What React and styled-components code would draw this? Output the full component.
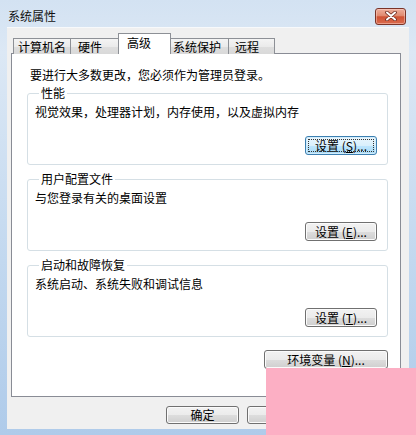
import React from 'react';
import styled, { createGlobalStyle } from 'styled-components';

const GlobalStyle = createGlobalStyle`
  html, body {
    margin: 0;
    padding: 0;
  }
  body {
    width: 416px;
    height: 435px;
    overflow: hidden;
    font-family: "Noto Sans CJK SC", "Microsoft YaHei", sans-serif;
    font-size: 12px;
    color: #000;
  }
`;

const Frame = styled.div`
  position: relative;
  width: 416px;
  height: 435px;
  box-sizing: border-box;
  padding: 0 7px 6px 7px;
  display: flex;
  flex-direction: column;
  background: linear-gradient(to bottom, #d3e2f2 0%, #dce8f5 12%, #c2d8ef 60%, #afcbea 100%);
`;

const TitleBar = styled.div`
  height: 28px;
  box-sizing: border-box;
  padding: 4px 3px 0 1px;
  display: flex;
  align-items: center;
  justify-content: space-between;
`;

const Title = styled.span`
  line-height: 14px;
  color: #111;
`;

const CloseButton = styled.div`
  width: 31px;
  height: 17px;
  box-sizing: border-box;
  border: 1px solid #7a3428;
  border-radius: 3px;
  background: linear-gradient(to bottom, #eeae9c 0%, #e08a6f 45%, #cf5234 52%, #da6c4f 100%);
  box-shadow: inset 0 0 0 1px rgba(255, 220, 210, 0.45);
  display: flex;
  align-items: center;
  justify-content: center;
`;

const Client = styled.div`
  flex: 1;
  display: flex;
  flex-direction: column;
  box-sizing: border-box;
  padding: 5px 8px 0 4px;
  background: #f0f0f0;
  border-top: 1px solid #f7f9fb;
  margin-top: -1px;
`;

const TabRow = styled.div`
  display: flex;
  align-items: flex-end;
  padding-left: 2px;
  margin-bottom: -1px;
  position: relative;
  z-index: 1;
`;

const Tab = styled.div`
  position: relative;
  box-sizing: border-box;
  width: ${(p) => p.$w}px;
  height: ${(p) => (p.$active ? 21 : 16)}px;
  margin-left: ${(p) => p.$ml}px;
  padding: ${(p) => (p.$active ? 2 : 1)}px 0 0 ${(p) => p.$pl}px;
  border: 1px solid #8d9096;
  border-bottom: none;
  line-height: 14px;
  white-space: nowrap;
  background: ${(p) =>
    p.$active ? '#ffffff' : 'linear-gradient(to bottom, #f4f4f4 0%, #ebebeb 50%, #dedede 51%, #d9d9d9 100%)'};
  z-index: ${(p) => (p.$active ? 2 : 1)};
`;

const Panel = styled.div`
  flex: 1;
  box-sizing: border-box;
  padding: 14px 12px 0 15px;
  background: #fff;
  border: 1px solid #898c95;
  display: flex;
  flex-direction: column;
`;

const Intro = styled.div`
  line-height: 14px;
  margin: 0 0 4px 3px;
`;

const Group = styled.fieldset`
  margin: 0 0 7px 0;
  padding: 5px 10px 9px 7px;
  border: 1px solid #d5dfe5;
  border-radius: 3px;
  min-width: 0;
`;

const Legend = styled.legend`
  padding: 0 2px;
  margin-left: 4px;
  line-height: 14px;
`;

const GroupText = styled.div`
  line-height: 14px;
`;

const ButtonLine = styled.div`
  display: flex;
  justify-content: flex-end;
  margin-top: ${(p) => p.$mt || 0}px;
`;

const Button = styled.div`
  width: ${(p) => p.$w}px;
  height: ${(p) => p.$h || 19}px;
  box-sizing: border-box;
  border: 1px solid ${(p) => (p.$focus ? '#3c7fb1' : '#707070')};
  border-radius: 3px;
  background: ${(p) =>
    p.$focus
      ? 'linear-gradient(to bottom, #eaf6fd 0%, #d9f0fc 50%, #bee6fd 51%, #a7d9f5 100%)'
      : 'linear-gradient(to bottom, #f2f2f2 0%, #ebebeb 50%, #dddddd 51%, #cfcfcf 100%)'};
  box-shadow: inset 0 0 0 1px ${(p) => (p.$focus ? '#d2ecfb' : '#fbfbfb')};
  display: flex;
  align-items: center;
  justify-content: center;
  line-height: 14px;
  white-space: nowrap;
  position: relative;

  ${(p) =>
    p.$focus &&
    `
    &::after {
      content: '';
      position: absolute;
      inset: 2px;
      border: 1px dotted #333;
    }
  `}
`;

const Key = styled.u`
  text-decoration-thickness: 1px;
  text-underline-offset: 1px;
`;

const Footer = styled.div`
  height: 32px;
  box-sizing: border-box;
  padding-top: 9px;
  display: flex;
  justify-content: flex-end;
  gap: 8px;
`;

const Cover = styled.div`
  position: absolute;
  left: 266px;
  top: 368px;
  width: 150px;
  height: 67px;
  background: #fcafc4;
`;

const CloseIcon = () => (
  <svg width="12" height="10" viewBox="0 0 12 10">
    <path d="M2 1.5 L10 8.5 M10 1.5 L2 8.5" stroke="#6b2a20" strokeWidth="3.6" strokeLinecap="round" />
    <path d="M2 1.5 L10 8.5 M10 1.5 L2 8.5" stroke="#ffffff" strokeWidth="2" strokeLinecap="round" />
  </svg>
);

const tabs = [
  { label: '计算机名', w: 58, ml: 0, pl: 4 },
  { label: '硬件', w: 51, ml: -1, pl: 7 },
  { label: '高级', w: 53, ml: -3, pl: 8, active: true },
  { label: '系统保护', w: 59, ml: -1, pl: 2 },
  { label: '远程', w: 47, ml: -1, pl: 6 },
];

const groups = [
  { title: '性能', text: '视觉效果，处理器计划，内存使用，以及虚拟内存', key: 'S', focus: true },
  { title: '用户配置文件', text: '与您登录有关的桌面设置', key: 'E' },
  { title: '启动和故障恢复', text: '系统启动、系统失败和调试信息', key: 'T' },
];

export default function App() {
  return (
    <>
      <GlobalStyle />
      <Frame>
        <TitleBar>
          <Title>系统属性</Title>
          <CloseButton>
            <CloseIcon />
          </CloseButton>
        </TitleBar>
        <Client>
          <TabRow>
            {tabs.map((t) => (
              <Tab key={t.label} $w={t.w} $ml={t.ml} $pl={t.pl} $active={t.active}>
                {t.label}
              </Tab>
            ))}
          </TabRow>
          <Panel>
            <Intro>要进行大多数更改，您必须作为管理员登录。</Intro>
            {groups.map((g) => (
              <Group key={g.title}>
                <Legend>{g.title}</Legend>
                <GroupText>{g.text}</GroupText>
                <ButtonLine $mt={17}>
                  <Button $w={72} $focus={g.focus}>
                    设置 (<Key>{g.key}</Key>)...
                  </Button>
                </ButtonLine>
              </Group>
            ))}
            <ButtonLine $mt={6}>
              <Button $w={124}>
                环境变量 (<Key>N</Key>)...
              </Button>
            </ButtonLine>
          </Panel>
          <Footer>
            <Button $w={73} $h={18}>确定</Button>
            <Button $w={73} $h={18}>取消</Button>
            <Button $w={73} $h={18}>应用 (<Key>A</Key>)</Button>
          </Footer>
        </Client>
        <Cover />
      </Frame>
    </>
  );
}
